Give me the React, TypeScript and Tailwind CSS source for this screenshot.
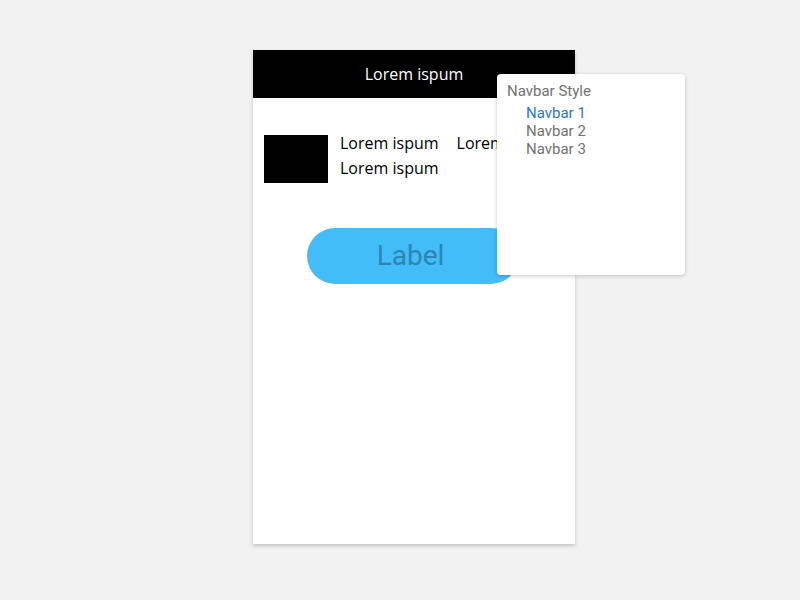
import React from "react"

const navItems = ["Navbar 1", "Navbar 2", "Navbar 3"]

const App = () => {
    return (
        <div className="min-h-[600px] w-[800px] bg-[#f2f2f2] pt-[50px] pl-[253px] relative">
            <div className="w-[322px] h-[494px] bg-white shadow-[0_2px_4px_rgba(0,0,0,0.2)] flex flex-col font-['Open_Sans',sans-serif]">
                <div className="h-[48px] bg-black text-white flex items-center justify-center text-[16px]">
                    Lorem ispum
                </div>
                <div className="flex items-start gap-3 px-[11px] mt-[37px]">
                    <div className="w-[64px] h-[48px] bg-black shrink-0" />
                    <div className="flex flex-wrap gap-x-[18px] text-[16px] leading-[25px] text-black -mt-[4px]">
                        <span>Lorem ispum</span>
                        <span>Lorem ispum</span>
                        <span>Lorem ispum</span>
                    </div>
                </div>
                <div className="flex justify-center mt-[45px]">
                    <button className="w-[212px] h-[56px] rounded-full bg-[#42bdf8] text-[#2e85b5] text-[28px] font-['Roboto',sans-serif] ml-[-3px] pr-[4px]">
                        Label
                    </button>
                </div>
            </div>

            <div className="absolute left-[497px] top-[74px] w-[188px] h-[201px] bg-white rounded-[4px] shadow-[0_1px_4px_rgba(0,0,0,0.2)] pt-[7px] px-[10px] font-['Roboto',sans-serif]">
                <div className="text-[15px] text-[#727272] leading-[20px]">Navbar Style</div>
                <ul className="pl-[19px] mt-[3px] text-[15px] leading-[18px]">
                    {navItems.map((item, i) => (
                        <li key={item} className={i === 0 ? "text-[#2c77cc]" : "text-[#727272]"}>
                            {item}
                        </li>
                    ))}
                </ul>
            </div>
        </div>
    )
}

export default App
